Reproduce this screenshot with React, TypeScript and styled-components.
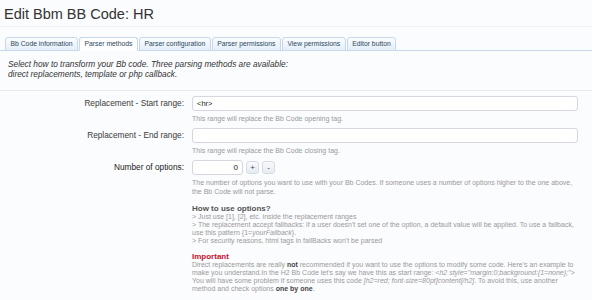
import React from 'react';
import styled, { createGlobalStyle } from 'styled-components';

const GlobalStyle = createGlobalStyle`
  body {
    margin: 0;
    background: #fbfcfe;
    font-family: Tahoma, "Liberation Sans", "DejaVu Sans", sans-serif;
    color: #333;
  }
`;

const Page = styled.div`
  width: 592px;
  height: 300px;
  overflow: hidden;
`;

const TitleBar = styled.div`
  padding: 4px 4px 0;
  height: 22px;
  border-bottom: 1px solid #eef0f4;
`;

const Title = styled.h1`
  margin: 0;
  font-size: 14.5px;
  font-weight: normal;
  color: #333;
  line-height: 20px;
`;

const Tabs = styled.ul`
  display: flex;
  list-style: none;
  margin: 10px 0 0;
  padding: 0 5px;
  border-bottom: 1px solid #c8d8ea;
`;

const Tab = styled.li<{ $active?: boolean }>`
  height: 12px;
  line-height: 12px;
  padding: 0 4.5px;
  margin-right: 1px;
  margin-bottom: -1px;
  font-size: 6.8px;
  color: #2b485c;
  border: 1px solid #c8d8ea;
  border-bottom-color: ${(p) => (p.$active ? '#fff' : '#c8d8ea')};
  border-radius: 3px 3px 0 0;
  background: ${(p) => (p.$active ? '#fff' : 'linear-gradient(#fbfdff, #e4eef9)')};
`;

const Intro = styled.p`
  margin: 0;
  padding: 8px 8px 11px;
  font-size: 8.3px;
  line-height: 10px;
  font-style: italic;
  color: #333;
  border-bottom: 1px solid #e6e9ef;
`;

const Form = styled.div`
  padding-top: 5px;
`;

const Row = styled.div`
  display: grid;
  grid-template-columns: 184px 386px;
  column-gap: 8px;
  margin-bottom: 5px;
`;

const Label = styled.div<{ $strong?: boolean }>`
  text-align: right;
  font-size: 8.3px;
  line-height: 15px;
  color: ${(p) => (p.$strong ? '#222' : '#3a3a3a')};
`;

const Field = styled.div``;

const TextInput = styled.div<{ $w?: number }>`
  box-sizing: border-box;
  width: ${(p) => (p.$w ? `${p.$w}px` : '100%')};
  height: 15px;
  padding: 0 4px;
  border: 1px solid #d4d8de;
  border-radius: 3px;
  background: #fff;
  font-size: 7.5px;
  line-height: 13px;
  color: #222;
`;

const Spinner = styled.div`
  display: flex;
  align-items: center;
  gap: 3px;
`;

const NumberInput = styled(TextInput)`
  text-align: right;
  font-size: 8px;
`;

const SpinButton = styled.div`
  box-sizing: border-box;
  width: 13px;
  height: 13px;
  border: 1px solid #d8dde5;
  border-radius: 3px;
  background: linear-gradient(#f7f9fc, #e6ebf2);
  font-size: 8px;
  line-height: 11px;
  text-align: center;
  color: #444;
`;

const Hint = styled.div`
  margin-top: 3px;
  font-size: 7px;
  line-height: 9px;
  color: #9a9a9a;
`;

const SubTitle = styled.div<{ $red?: boolean }>`
  margin-top: ${(p) => (p.$red ? '7px' : '8px')};
  font-size: 8px;
  line-height: 9px;
  font-weight: bold;
  color: ${(p) => (p.$red ? '#c8102e' : '#555')};
`;

const Para = styled.div`
  font-size: 7px;
  line-height: 8px;
  color: #9a9a9a;
  & b {
    color: #444;
  }
`;

export default function App() {
  return (
    <Page>
      <GlobalStyle />
      <TitleBar>
        <Title>Edit Bbm BB Code: HR</Title>
      </TitleBar>
      <Tabs>
        <Tab>Bb Code information</Tab>
        <Tab $active>Parser methods</Tab>
        <Tab>Parser configuration</Tab>
        <Tab>Parser permissions</Tab>
        <Tab>View permissions</Tab>
        <Tab>Editor button</Tab>
      </Tabs>
      <Intro>
        Select how to transform your Bb code. Three parsing methods are available:
        <br />
        direct replacements, template or php callback.
      </Intro>
      <Form>
        <Row>
          <Label>Replacement - Start range:</Label>
          <Field>
            <TextInput>&lt;hr&gt;</TextInput>
            <Hint>This range will replace the Bb Code opening tag.</Hint>
          </Field>
        </Row>
        <Row>
          <Label>Replacement - End range:</Label>
          <Field>
            <TextInput />
            <Hint>This range will replace the Bb Code closing tag.</Hint>
          </Field>
        </Row>
        <Row>
          <Label $strong>Number of options:</Label>
          <Field>
            <Spinner>
              <NumberInput $w={51}>0</NumberInput>
              <SpinButton>+</SpinButton>
              <SpinButton>-</SpinButton>
            </Spinner>
            <Hint>
              The number of options you want to use with your Bb Codes. If someone uses a number of options higher to the one above,
              <br />
              the Bb Code will not parse.
            </Hint>
            <SubTitle>How to use options?</SubTitle>
            <Para>
              &gt; Just use [1], [2], etc. inside the replacement ranges
              <br />
              &gt; The replacement accept fallbacks: if a user doesn't set one of the option, a default value will be applied. To use a fallback,
              <br />
              use this pattern {'{'}1=<i>yourFallback</i>{'}'}.
              <br />
              &gt; For security reasons, html tags in fallBacks won't be parsed
            </Para>
            <SubTitle $red>Important</SubTitle>
            <Para>
              Direct replacements are really <b>not</b> recommended if you want to use the options to modify some code. Here's an example to
              <br />
              make you understand.In the H2 Bb Code let's say we have this as start range: <i>&lt;h2 style="margin:0;background:{'{'}1=none{'}'};"&gt;</i>
              <br />
              You will have some problem if someone uses this code <i>[h2=red; font-size=80pt]content[/h2]</i>. To avoid this, use another
              <br />
              method and check options <b>one by one</b>.
            </Para>
          </Field>
        </Row>
      </Form>
    </Page>
  );
}
